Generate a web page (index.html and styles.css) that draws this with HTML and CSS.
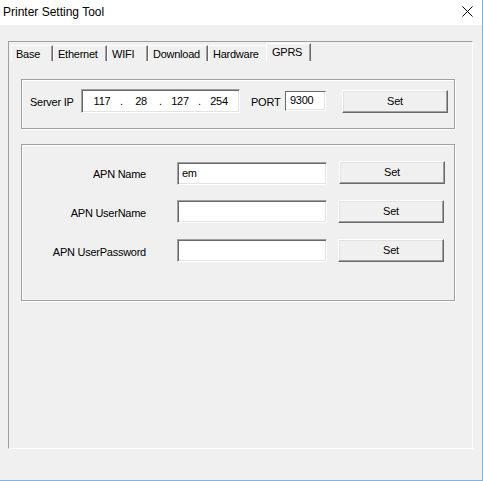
FILE: index.html
```html
<!DOCTYPE html>
<html>
<head>
<meta charset="utf-8">
<title>Printer Setting Tool</title>
<link rel="stylesheet" href="styles.css">
</head>
<body>
<div class="window">
  <div class="titlebar">
    <span class="title">Printer Setting Tool</span>
    <svg class="close" width="11" height="11" viewBox="0 0 11 11"><path d="M0.5 0.5 L10.5 10.5 M10.5 0.5 L0.5 10.5" stroke="#000" stroke-width="1" fill="none"/></svg>
  </div>
  <div class="client">
    <div class="tabctrl">
      <div class="tabs">
        <div class="tab t-base">Base</div>
        <div class="tab t-eth">Ethernet</div>
        <div class="tab t-wifi">WIFI</div>
        <div class="tab t-dl">Download</div>
        <div class="tab t-hw">Hardware</div>
        <div class="tab t-gprs selected">GPRS</div>
      </div>
      <div class="page">
        <div class="group server">
          <div class="srow">
            <span class="lbl-ip">Server IP</span>
            <div class="ipbox">
              <span class="oct">117</span><span class="dot">.</span><span class="oct">28</span><span class="dot">.</span><span class="oct">127</span><span class="dot">.</span><span class="oct">254</span>
            </div>
            <span class="lbl-port">PORT</span>
            <div class="portbox">9300</div>
            <div class="btn btn-server">Set</div>
          </div>
        </div>
        <div class="group apn">
          <div class="arow">
            <span class="alabel">APN Name</span>
            <div class="field field-first">em</div>
            <div class="btn btn-apn btn-first">Set</div>
          </div>
          <div class="arow">
            <span class="alabel">APN UserName</span>
            <div class="field"></div>
            <div class="btn btn-apn">Set</div>
          </div>
          <div class="arow">
            <span class="alabel">APN UserPassword</span>
            <div class="field"></div>
            <div class="btn btn-apn">Set</div>
          </div>
        </div>
      </div>
    </div>
  </div>
</div>
</body>
</html>
```

FILE: styles.css
```css
html, body {
  margin: 0;
  padding: 0;
}
body {
  width: 483px;
  height: 481px;
  overflow: hidden;
  background: #f0f0f0;
  font-family: "Liberation Sans", Arial, sans-serif;
  font-size: 11px;
  letter-spacing: -0.25px;
  color: #000;
}
.window {
  width: 483px;
  height: 481px;
  box-sizing: border-box;
  border-right: 1px solid #79b4e6;
  border-bottom: 1px solid #79b4e6;
  background: #f0f0f0;
  display: flex;
  flex-direction: column;
}
.titlebar {
  height: 25px;
  flex: none;
  background: #fff;
  display: flex;
  align-items: center;
  justify-content: space-between;
  padding: 0 9px 0 3px;
}
.title {
  font-size: 12px;
  letter-spacing: 0;
  position: relative;
  top: -1px;
}
.close {
  display: block;
  position: relative;
  top: -1px;
}
.client {
  flex: 1;
  padding: 16px 0 0 8px;
}
.tabctrl {
  width: 465px;
  height: 408px;
  box-sizing: border-box;
  border: 1px solid;
  border-color: #a0a0a0 #fff #fff #a0a0a0;
}
.tabs {
  display: flex;
  align-items: flex-end;
  height: 19px;
  padding-left: 2px;
}
.tab {
  height: 16px;
  box-sizing: border-box;
  border-left: 1px solid #fff;
  border-top: 1px solid #fff;
  border-right: 1px solid #696969;
  box-shadow: inset -1px 0 0 #a0a0a0;
  padding: 1px 0 0 4px;
  line-height: 15px;
  white-space: nowrap;
}
.t-base { width: 42px; }
.t-eth { width: 54px; }
.t-wifi { width: 41px; }
.t-dl { width: 60px; }
.t-hw { width: 58px; border-right: none; box-shadow: none; }
.t-gprs { width: 45px; }
.tab.selected {
  height: 18px;
  padding-left: 5px;
}
.page {
  padding: 18px 0 0 12px;
}
.group {
  width: 434px;
  box-sizing: border-box;
  border: 1px solid #a0a0a0;
  box-shadow: 1px 1px 0 #fff, inset 1px 1px 0 #fff;
}
.server {
  height: 50px;
  padding: 9px 0 0 8px;
}
.srow {
  display: flex;
  align-items: center;
  height: 24px;
}
.lbl-ip {
  width: 51px;
  flex: none;
  padding-top: 1px;
}
.ipbox {
  width: 159px;
  height: 24px;
  box-sizing: border-box;
  flex: none;
  background: #fff;
  border: 1px solid;
  border-color: #a0a0a0 #fff #fff #a0a0a0;
  box-shadow: inset 1px 1px 0 #696969, inset -1px -1px 0 #e3e3e3;
  display: flex;
  align-items: center;
  padding: 0 0 1px 6px;
}
.oct {
  width: 28px;
  text-align: center;
}
.dot {
  width: 11px;
  text-align: center;
}
.lbl-port {
  width: 34px;
  margin-left: 11px;
  flex: none;
  padding-top: 1px;
}
.portbox {
  width: 41px;
  height: 20px;
  box-sizing: border-box;
  flex: none;
  background: #fff;
  border: 1px solid;
  border-color: #696969 #fff #fff #696969;
  box-shadow: inset -1px -1px 0 #e3e3e3;
  padding-left: 4px;
  line-height: 17px;
}
.btn {
  width: 106px;
  height: 23px;
  box-sizing: border-box;
  flex: none;
  background: #f0f0f0;
  border: 1px solid;
  border-color: #fff #696969 #696969 #fff;
  box-shadow: inset -1px -1px 0 #a0a0a0, inset 1px 1px 0 #e3e3e3;
  text-align: center;
  line-height: 20px;
}
.btn-server {
  margin-left: 16px;
}
.apn {
  height: 157px;
  margin-top: 15px;
  padding-top: 16px;
  display: flex;
  flex-direction: column;
  gap: 16px;
}
.arow {
  display: flex;
  align-items: center;
  height: 23px;
}
.alabel {
  width: 124px;
  text-align: right;
  flex: none;
  padding-top: 3px;
}
.field {
  width: 150px;
  height: 23px;
  box-sizing: border-box;
  margin-left: 31px;
  flex: none;
  background: #fff;
  border: 1px solid;
  border-color: #a0a0a0 #fff #fff #a0a0a0;
  box-shadow: inset 1px 1px 0 #696969, inset -1px -1px 0 #e3e3e3;
  padding-left: 4px;
  line-height: 20px;
}
.field-first {
  margin-top: 1px;
}
.btn-apn {
  margin-left: 11px;
}
.btn-first {
  margin-left: 12px;
}
```
